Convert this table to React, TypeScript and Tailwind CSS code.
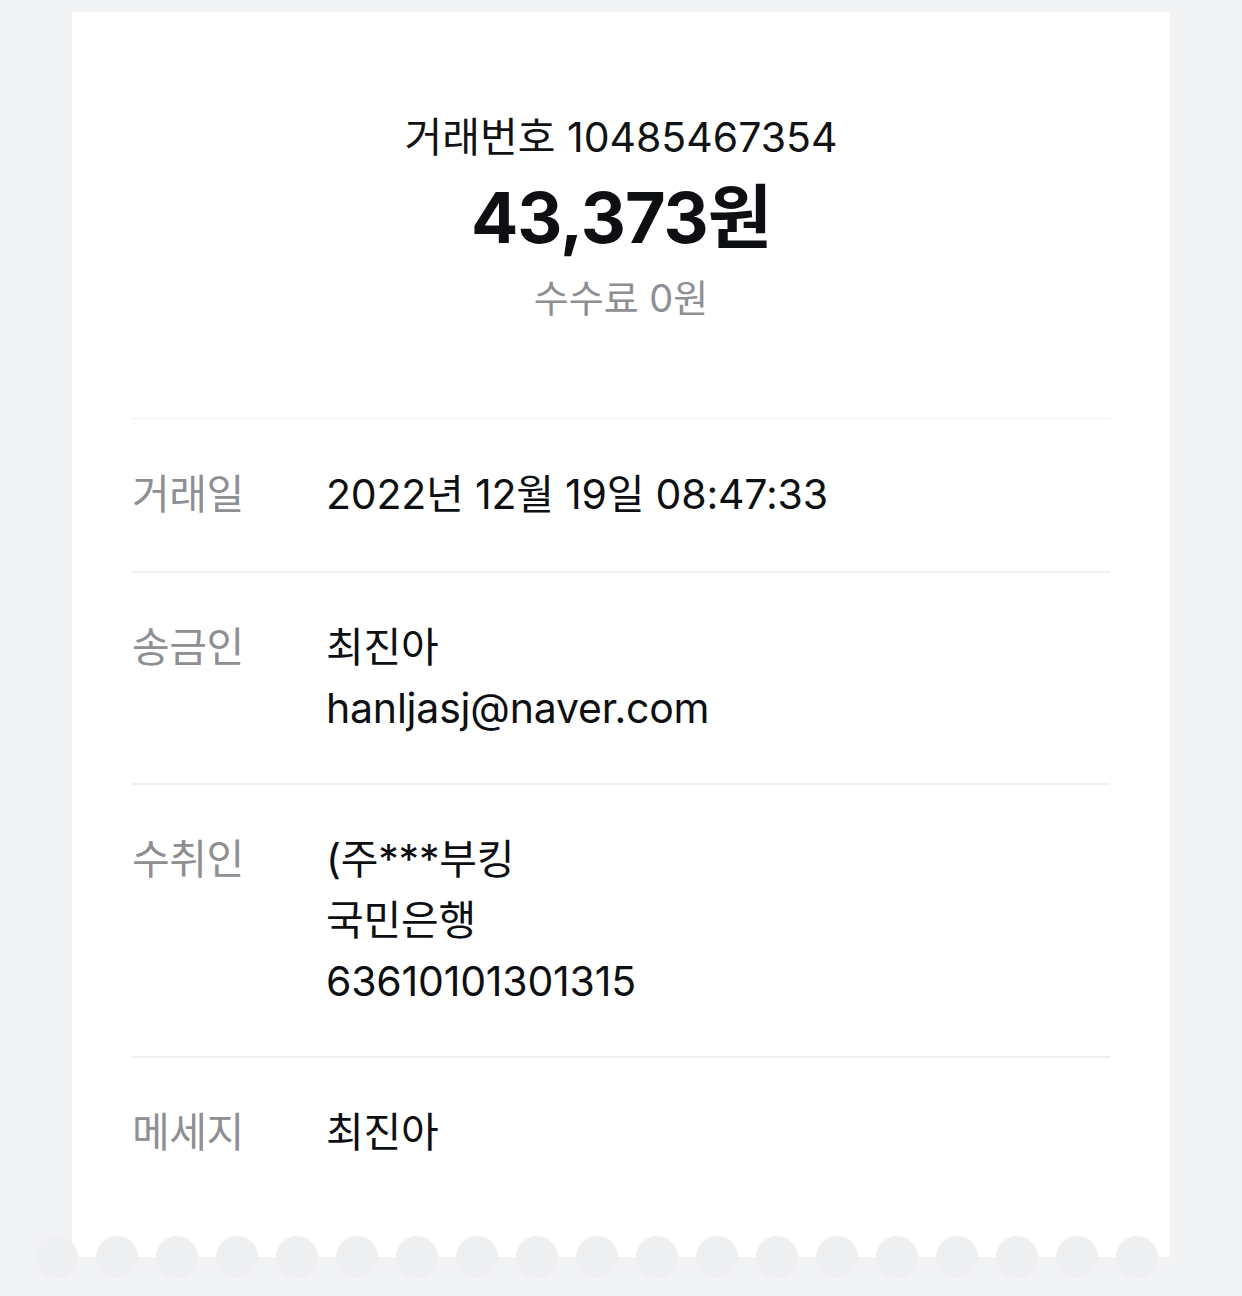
const rows = [
  { label: "거래일", lines: ["2022년 12월 19일 08:47:33"] },
  { label: "송금인", lines: ["최진아", "hanljasj@naver.com"] },
  { label: "수취인", lines: ["(주***부킹", "국민은행", "63610101301315"] },
  { label: "메세지", lines: ["최진아"] },
];

const font = "font-['Inter','Noto_Sans_CJK_KR',sans-serif]";

export default function App() {
  return (
    <div className={`min-h-[1296px] bg-[#f2f3f5] pt-[12px] ${font}`}>
      <div className="mx-[72px] bg-white px-[60px] pt-[100px] pb-[50px]">
        <div className="flex flex-col items-center">
          <p className="text-[41px] leading-[50px] text-[#111214]">
            거래번호 10485467354
          </p>
          <p className="mt-[16px] text-[70px] leading-[80px] font-bold text-[#0d0f12] tracking-[-1px]">
            43,373원
          </p>
          <p className="mt-[15px] text-[38px] leading-[50px] text-[#8e8f93]">
            수수료 0원
          </p>
        </div>

        <div className="mt-[95px] h-px bg-[#efeff1]" />
        {rows.map((row, i) => (
          <div key={row.label}>
            {i > 0 && <div className="h-[2px] bg-[#efeff1]" />}
            <div
              className={`flex text-[41px] leading-[61px] ${
                i === 0 ? "pt-[45px] pb-[46px]" : "pt-[44px] pb-[44px]"
              }`}
            >
              <p className="w-[194px] shrink-0 text-[#8e8f93] tracking-[-0.5px]">{row.label}</p>
              <div className="flex flex-col text-[#0d0f12]">
                {row.lines.map((line) => (
                  <p key={line} className="h-[61px] tracking-[-0.2px]">
                    {line}
                  </p>
                ))}
              </div>
            </div>
          </div>
        ))}
      </div>

      <div className="-mt-[21px] ml-[36px] flex gap-[18px]">
        {Array.from({ length: 19 }).map((_, i) => (
          <div key={i} className="h-[42px] w-[42px] shrink-0 rounded-full bg-[#eeeff1]" />
        ))}
      </div>
    </div>
  );
}
